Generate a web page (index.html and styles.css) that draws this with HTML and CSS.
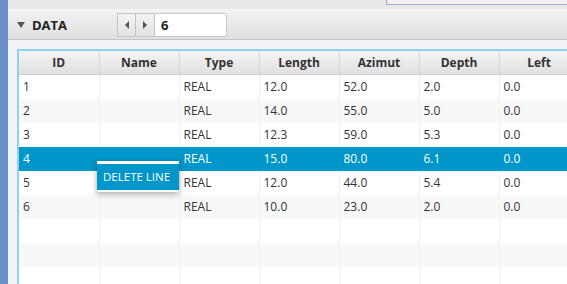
FILE: index.html
```html
<!DOCTYPE html>
<html>
<head>
    <title>Data</title>
    <link rel="stylesheet" href="styles.css">
</head>
<body>

<div class="app">
    <div class="side"></div>
    <div class="main">
        <div class="topstrip">
            <div class="topbox"></div>
        </div>
        <div class="titlebar">
            <svg class="arrow" width="8" height="6" viewBox="0 0 8 6"><path d="M0 0 L8 0 L4 6 Z" fill="#555"/></svg>
            <span class="title">DATA</span>
            <div class="pager">
                <button class="pager-btn"><svg width="6" height="8" viewBox="0 0 6 8"><path d="M5 0 L1 4 L5 8 Z" fill="#555"/></svg></button>
                <button class="pager-btn"><svg width="6" height="8" viewBox="0 0 6 8"><path d="M1 0 L5 4 L1 8 Z" fill="#555"/></svg></button>
                <input type="text" class="pager-field" value="6">
            </div>
        </div>
        <div class="content">
            <div class="table-wrap">
                <table class="grid">
                    <thead>
                        <tr>
                            <th>ID</th><th>Name</th><th>Type</th><th>Length</th><th>Azimut</th><th>Depth</th><th>Left</th><th></th>
                        </tr>
                    </thead>
                    <tbody>
                        <tr><td>1</td><td></td><td>REAL</td><td>12.0</td><td>52.0</td><td>2.0</td><td>0.0</td><td></td></tr>
                        <tr><td>2</td><td></td><td>REAL</td><td>14.0</td><td>55.0</td><td>5.0</td><td>0.0</td><td></td></tr>
                        <tr><td>3</td><td></td><td>REAL</td><td>12.3</td><td>59.0</td><td>5.3</td><td>0.0</td><td></td></tr>
                        <tr class="selected"><td>4</td><td></td><td>REAL</td><td>15.0</td><td>80.0</td><td>6.1</td><td>0.0</td><td></td></tr>
                        <tr><td>5</td><td></td><td>REAL</td><td>12.0</td><td>44.0</td><td>5.4</td><td>0.0</td><td></td></tr>
                        <tr><td>6</td><td></td><td>REAL</td><td>10.0</td><td>23.0</td><td>2.0</td><td>0.0</td><td></td></tr>
                        <tr><td></td><td></td><td></td><td></td><td></td><td></td><td></td><td></td></tr>
                        <tr><td></td><td></td><td></td><td></td><td></td><td></td><td></td><td></td></tr>
                        <tr><td></td><td></td><td></td><td></td><td></td><td></td><td></td><td></td></tr>
                    </tbody>
                </table>
                <div class="context-menu">
                    <div class="menu-item">DELETE LINE</div>
                </div>
            </div>
        </div>
    </div>
</div>

</body>
</html>
```

FILE: styles.css
```css
body {
    margin: 0;
    overflow: hidden;
    font-family: "Open Sans", "Noto Sans", sans-serif;
    font-size: 12px;
    color: #333;
    background-color: #f4f4f4;
}
.app {
    display: flex;
    height: 284px;
}
.side {
    width: 8px;
    flex-shrink: 0;
    background-color: #6b90c9;
}
.main {
    flex: 1;
    display: flex;
    flex-direction: column;
    min-width: 0;
    background-color: #f1f2f5;
}
.topstrip {
    height: 9px;
    background-color: #e8e8e8;
    border-bottom: 1px solid #f6f6f6;
    position: relative;
}
.topbox {
    position: absolute;
    left: 378px;
    top: 0;
    right: 0;
    height: 4px;
    background-color: #f2f2f4;
    border-left: 1px solid #a3aad6;
    border-bottom: 1px solid #a3aad6;
}
.titlebar {
    height: 29px;
    display: flex;
    align-items: center;
    background: linear-gradient(#f2f2f2, #e0e0e0);
    border-bottom: 1px solid #c4c4c4;
}
.arrow {
    margin-left: 9px;
    margin-right: 7px;
}
.title {
    font-weight: bold;
    font-size: 13px;
    color: #222;
    width: 85px;
}
.pager {
    display: flex;
    height: 24px;
}
.pager-btn {
    width: 19px;
    height: 24px;
    padding: 0;
    border: 1px solid #c2c2c2;
    background: linear-gradient(#f4f4f4, #e2e2e2);
    display: flex;
    align-items: center;
    justify-content: center;
}
.pager-btn + .pager-btn {
    border-left: none;
}
.pager-field {
    width: 72px;
    height: 24px;
    box-sizing: border-box;
    border: 1px solid #c8c8c8;
    border-left: none;
    background-color: #fff;
    font-family: inherit;
    font-size: 13px;
    font-weight: bold;
    color: #222;
    padding: 0 0 0 6px;
    border-radius: 0 3px 3px 0;
}
.content {
    flex: 1;
    padding: 9px 0 0 9px;
    overflow: hidden;
}
.table-wrap {
    position: relative;
    height: 100%;
    border: 2px solid #8fd2ef;
    border-right: none;
    border-bottom: none;
    background-color: #fff;
}
.grid {
    border-collapse: collapse;
    table-layout: fixed;
    width: 640px;
}
.grid th {
    width: 80px;
    height: 23px;
    box-sizing: border-box;
    font-weight: bold;
    font-size: 12px;
    color: #333;
    background: linear-gradient(#f4f4f4, #e0e0e0);
    border-right: 1px solid #d6d6d6;
    border-bottom: 1px solid #cfcfcf;
    padding: 1px 0 0;
}
.grid td {
    height: 24px;
    padding: 0 0 0 4px;
    border-right: 1px solid #f0f0f0;
    white-space: nowrap;
    overflow: hidden;
}
.grid tbody tr:nth-child(even) td {
    background-color: #f8f8f8;
}
.grid tbody tr.selected td {
    background-color: #0096c9;
    color: #fff;
    border-right-color: #0096c9;
}
.context-menu {
    position: absolute;
    left: 78px;
    top: 110px;
    width: 82px;
    padding: 3px 0 2px;
    background-color: #fff;
    box-shadow: 0 2px 6px rgba(0, 0, 0, 0.35);
}
.menu-item {
    height: 26px;
    line-height: 26px;
    padding-left: 6px;
    background-color: #0096c9;
    color: #fff;
    font-size: 11.5px;
}
```
